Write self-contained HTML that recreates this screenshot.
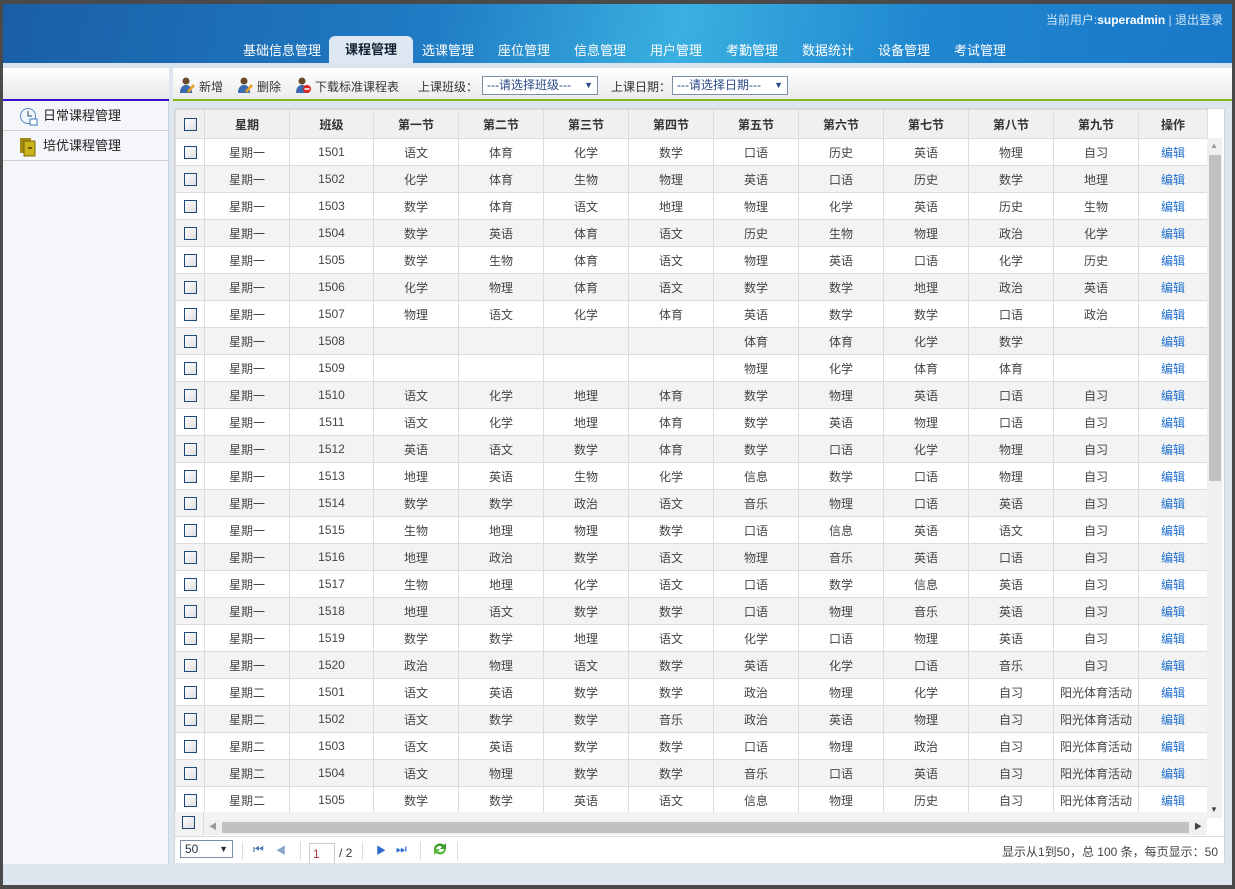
<!DOCTYPE html>
<html><head><meta charset="utf-8"><style>
*{margin:0;padding:0;box-sizing:border-box}
body{width:1235px;height:889px;overflow:hidden;background:#4a4a4a;font-family:"Liberation Sans","Noto Sans CJK SC",sans-serif;font-size:12px;color:#333;position:relative}
.abs{position:absolute}
#frame{left:3px;top:4px;width:1229px;height:881px;background:#dde6ef}
#hdr{left:3px;top:4px;width:1229px;height:59px;background:linear-gradient(100deg,#1a5fa6 0%,#1f7cc4 35%,#3ab0e0 55%,#1f86cf 75%,#1a78c8 100%)}
#user{right:12px;top:11px;color:#cfe6f7;font-size:12px}
#user b{color:#fff}
.nav{top:40px;color:#fff;font-size:13px}
#tab{left:329px;top:36px;width:84px;height:27px;background:#dde8f2;border-radius:6px 6px 0 0;color:#123;font-weight:bold;font-size:13px;text-align:center;line-height:28px}
#side{left:3px;top:68px;width:166px;height:796px;background:#f4f6f9;border-right:1px solid #cbd3dc}
#sidetop{left:3px;top:68px;width:166px;height:32px;background:linear-gradient(#fff,#e6e6e6)}
#sideline{left:3px;top:99px;width:166px;height:2px;background:#3a10d0}
.si{left:3px;width:166px;height:30px;border-bottom:1px solid #cfcfcf;font-size:13px;line-height:30px;padding-left:40px;color:#222}
#tool{left:173px;top:68px;width:1059px;height:32px;background:linear-gradient(#fff,#ebebeb)}
#green{left:173px;top:99px;width:1059px;height:2px;background:#8ab51a}
.sel{height:19px;border:1px solid #7a8ea8;background:#fff;color:#2b4a8a;line-height:17px;padding-left:4px;top:76px;font-size:12px}
#grid{left:174px;top:108px;width:1051px;height:755px;background:#fff;border:1px solid #d5d5d5}
table{border-collapse:collapse;table-layout:fixed;position:absolute;left:175px;top:109px}
td{height:27px;border:1px solid #dcdcdc;text-align:center;font-size:12px;color:#444;white-space:nowrap;overflow:hidden}
tr.h td{height:29px;background:#f0f0f0;font-weight:bold;color:#333}
tr:nth-child(odd):not(.h) td{background:#f3f3f3}
td a{color:#1f6fd0}
.cb{display:inline-block;width:13px;height:13px;border:1px solid #1e4a7a;background:linear-gradient(135deg,#fff,#ddd);vertical-align:middle}
#vs{left:1207px;top:138px;width:15px;height:680px;background:#f0f0f0}
#hs{left:204px;top:820px;width:1003px;height:15px;background:#f0f0f0}
#pager{left:175px;top:836px;width:1049px;height:27px;background:#fff;border-top:1px solid #ddd}
</style></head><body>
<div class="abs" id="frame"></div>
<div class="abs" id="hdr"></div>
<div class="abs" id="user">当前用户:<b>superadmin</b> | 退出登录</div>
<div class="abs nav" style="left:243px">基础信息管理</div>
<div class="abs" id="tab">课程管理</div>
<div class="abs nav" style="left:422px">选课管理</div>
<div class="abs nav" style="left:498px">座位管理</div>
<div class="abs nav" style="left:574px">信息管理</div>
<div class="abs nav" style="left:650px">用户管理</div>
<div class="abs nav" style="left:726px">考勤管理</div>
<div class="abs nav" style="left:802px">数据统计</div>
<div class="abs nav" style="left:878px">设备管理</div>
<div class="abs nav" style="left:954px">考试管理</div>
<div class="abs" style="left:3px;top:63px;width:1229px;height:5px;background:#d8e3ee"></div>
<div class="abs" id="side"></div>
<div class="abs" id="sidetop"></div>
<div class="abs" id="sideline"></div>
<div class="abs si" style="top:101px">日常课程管理</div>
<div class="abs si" style="top:131px">培优课程管理</div>
<svg class="abs" style="left:19px;top:107px" width="20" height="20"><circle cx="9" cy="9" r="7.5" fill="#eef5fb" stroke="#5a8ab8"/><path d="M9 4v5h4" stroke="#345" fill="none"/><rect x="11" y="12" width="7" height="6" fill="#fff" stroke="#3a7ac0"/></svg>
<svg class="abs" style="left:19px;top:137px" width="20" height="20"><rect x="1" y="1" width="11" height="15" fill="#a08a10"/><rect x="5" y="4" width="11" height="15" fill="#c8b418" stroke="#7a6a08"/><rect x="9" y="10" width="4" height="2" fill="#6a5a00"/></svg>
<div class="abs" id="tool"></div>
<div class="abs" id="green"></div>
<svg class="abs" style="left:179px;top:77px" width="16" height="16"><circle cx="7" cy="4" r="3.5" fill="#6a4a2a"/><path d="M1 16c0-6 3-8 6-8s6 2 6 8z" fill="#3a6ab0"/><path d="M9 15l6-7" stroke="#e8a020" stroke-width="2.5"/></svg>
<div class="abs" style="left:199px;top:78px">新增</div>
<svg class="abs" style="left:237px;top:77px" width="16" height="16"><circle cx="7" cy="4" r="3.5" fill="#6a4a2a"/><path d="M1 16c0-6 3-8 6-8s6 2 6 8z" fill="#3a6ab0"/><path d="M9 15l6-7" stroke="#e8a020" stroke-width="2.5"/></svg>
<div class="abs" style="left:257px;top:78px">删除</div>
<svg class="abs" style="left:295px;top:77px" width="16" height="16"><circle cx="7" cy="4" r="3.5" fill="#6a4a2a"/><path d="M1 16c0-6 3-8 6-8s6 2 6 8z" fill="#3a6ab0"/><circle cx="12" cy="12" r="4" fill="#e02020"/><rect x="9.5" y="11.2" width="5" height="1.6" fill="#fff"/></svg>
<div class="abs" style="left:315px;top:78px">下载标准课程表</div>
<div class="abs" style="left:418px;top:78px">上课班级：</div>
<div class="abs sel" style="left:482px;width:116px">---请选择班级--- <span style="float:right;margin-right:4px;font-size:9px">▼</span></div>
<div class="abs" style="left:611px;top:78px">上课日期：</div>
<div class="abs sel" style="left:672px;width:116px">---请选择日期--- <span style="float:right;margin-right:4px;font-size:9px">▼</span></div>
<div class="abs" id="grid"></div>
<table>
<colgroup><col width="29"><col width="85"><col width="84"><col width="85"><col width="85"><col width="85"><col width="85"><col width="85"><col width="85"><col width="85"><col width="85"><col width="85"><col width="69"></colgroup>
<tr class="h"><td><span class="cb"></span></td><td>星期</td><td>班级</td><td>第一节</td><td>第二节</td><td>第三节</td><td>第四节</td><td>第五节</td><td>第六节</td><td>第七节</td><td>第八节</td><td>第九节</td><td>操作</td></tr>
<tr><td><span class="cb"></span></td><td>星期一</td><td>1501</td><td>语文</td><td>体育</td><td>化学</td><td>数学</td><td>口语</td><td>历史</td><td>英语</td><td>物理</td><td>自习</td><td><a>编辑</a></td></tr>
<tr><td><span class="cb"></span></td><td>星期一</td><td>1502</td><td>化学</td><td>体育</td><td>生物</td><td>物理</td><td>英语</td><td>口语</td><td>历史</td><td>数学</td><td>地理</td><td><a>编辑</a></td></tr>
<tr><td><span class="cb"></span></td><td>星期一</td><td>1503</td><td>数学</td><td>体育</td><td>语文</td><td>地理</td><td>物理</td><td>化学</td><td>英语</td><td>历史</td><td>生物</td><td><a>编辑</a></td></tr>
<tr><td><span class="cb"></span></td><td>星期一</td><td>1504</td><td>数学</td><td>英语</td><td>体育</td><td>语文</td><td>历史</td><td>生物</td><td>物理</td><td>政治</td><td>化学</td><td><a>编辑</a></td></tr>
<tr><td><span class="cb"></span></td><td>星期一</td><td>1505</td><td>数学</td><td>生物</td><td>体育</td><td>语文</td><td>物理</td><td>英语</td><td>口语</td><td>化学</td><td>历史</td><td><a>编辑</a></td></tr>
<tr><td><span class="cb"></span></td><td>星期一</td><td>1506</td><td>化学</td><td>物理</td><td>体育</td><td>语文</td><td>数学</td><td>数学</td><td>地理</td><td>政治</td><td>英语</td><td><a>编辑</a></td></tr>
<tr><td><span class="cb"></span></td><td>星期一</td><td>1507</td><td>物理</td><td>语文</td><td>化学</td><td>体育</td><td>英语</td><td>数学</td><td>数学</td><td>口语</td><td>政治</td><td><a>编辑</a></td></tr>
<tr><td><span class="cb"></span></td><td>星期一</td><td>1508</td><td></td><td></td><td></td><td></td><td>体育</td><td>体育</td><td>化学</td><td>数学</td><td></td><td><a>编辑</a></td></tr>
<tr><td><span class="cb"></span></td><td>星期一</td><td>1509</td><td></td><td></td><td></td><td></td><td>物理</td><td>化学</td><td>体育</td><td>体育</td><td></td><td><a>编辑</a></td></tr>
<tr><td><span class="cb"></span></td><td>星期一</td><td>1510</td><td>语文</td><td>化学</td><td>地理</td><td>体育</td><td>数学</td><td>物理</td><td>英语</td><td>口语</td><td>自习</td><td><a>编辑</a></td></tr>
<tr><td><span class="cb"></span></td><td>星期一</td><td>1511</td><td>语文</td><td>化学</td><td>地理</td><td>体育</td><td>数学</td><td>英语</td><td>物理</td><td>口语</td><td>自习</td><td><a>编辑</a></td></tr>
<tr><td><span class="cb"></span></td><td>星期一</td><td>1512</td><td>英语</td><td>语文</td><td>数学</td><td>体育</td><td>数学</td><td>口语</td><td>化学</td><td>物理</td><td>自习</td><td><a>编辑</a></td></tr>
<tr><td><span class="cb"></span></td><td>星期一</td><td>1513</td><td>地理</td><td>英语</td><td>生物</td><td>化学</td><td>信息</td><td>数学</td><td>口语</td><td>物理</td><td>自习</td><td><a>编辑</a></td></tr>
<tr><td><span class="cb"></span></td><td>星期一</td><td>1514</td><td>数学</td><td>数学</td><td>政治</td><td>语文</td><td>音乐</td><td>物理</td><td>口语</td><td>英语</td><td>自习</td><td><a>编辑</a></td></tr>
<tr><td><span class="cb"></span></td><td>星期一</td><td>1515</td><td>生物</td><td>地理</td><td>物理</td><td>数学</td><td>口语</td><td>信息</td><td>英语</td><td>语文</td><td>自习</td><td><a>编辑</a></td></tr>
<tr><td><span class="cb"></span></td><td>星期一</td><td>1516</td><td>地理</td><td>政治</td><td>数学</td><td>语文</td><td>物理</td><td>音乐</td><td>英语</td><td>口语</td><td>自习</td><td><a>编辑</a></td></tr>
<tr><td><span class="cb"></span></td><td>星期一</td><td>1517</td><td>生物</td><td>地理</td><td>化学</td><td>语文</td><td>口语</td><td>数学</td><td>信息</td><td>英语</td><td>自习</td><td><a>编辑</a></td></tr>
<tr><td><span class="cb"></span></td><td>星期一</td><td>1518</td><td>地理</td><td>语文</td><td>数学</td><td>数学</td><td>口语</td><td>物理</td><td>音乐</td><td>英语</td><td>自习</td><td><a>编辑</a></td></tr>
<tr><td><span class="cb"></span></td><td>星期一</td><td>1519</td><td>数学</td><td>数学</td><td>地理</td><td>语文</td><td>化学</td><td>口语</td><td>物理</td><td>英语</td><td>自习</td><td><a>编辑</a></td></tr>
<tr><td><span class="cb"></span></td><td>星期一</td><td>1520</td><td>政治</td><td>物理</td><td>语文</td><td>数学</td><td>英语</td><td>化学</td><td>口语</td><td>音乐</td><td>自习</td><td><a>编辑</a></td></tr>
<tr><td><span class="cb"></span></td><td>星期二</td><td>1501</td><td>语文</td><td>英语</td><td>数学</td><td>数学</td><td>政治</td><td>物理</td><td>化学</td><td>自习</td><td>阳光体育活动</td><td><a>编辑</a></td></tr>
<tr><td><span class="cb"></span></td><td>星期二</td><td>1502</td><td>语文</td><td>数学</td><td>数学</td><td>音乐</td><td>政治</td><td>英语</td><td>物理</td><td>自习</td><td>阳光体育活动</td><td><a>编辑</a></td></tr>
<tr><td><span class="cb"></span></td><td>星期二</td><td>1503</td><td>语文</td><td>英语</td><td>数学</td><td>数学</td><td>口语</td><td>物理</td><td>政治</td><td>自习</td><td>阳光体育活动</td><td><a>编辑</a></td></tr>
<tr><td><span class="cb"></span></td><td>星期二</td><td>1504</td><td>语文</td><td>物理</td><td>数学</td><td>数学</td><td>音乐</td><td>口语</td><td>英语</td><td>自习</td><td>阳光体育活动</td><td><a>编辑</a></td></tr>
<tr><td><span class="cb"></span></td><td>星期二</td><td>1505</td><td>数学</td><td>数学</td><td>英语</td><td>语文</td><td>信息</td><td>物理</td><td>历史</td><td>自习</td><td>阳光体育活动</td><td><a>编辑</a></td></tr>
</table>
<div class="abs" style="left:204px;top:812px;width:1003px;height:8px;background:#f3f3f3"></div>
<div class="abs" style="left:175px;top:812px;width:29px;height:24px;background:#f3f3f3;border-right:1px solid #dcdcdc"><span class="cb" style="position:absolute;left:7px;top:4px"></span></div>
<div class="abs" id="hs"><div class="abs" style="left:18px;top:2px;width:967px;height:11px;background:#c1c1c1"></div><span class="abs" style="left:5px;top:1px;font-size:8px;color:#999">◀</span><span class="abs" style="right:5px;top:1px;font-size:8px;color:#444">▶</span></div>
<div class="abs" id="vs"><div class="abs" style="left:2px;top:17px;width:12px;height:326px;background:#c1c1c1"></div><span class="abs" style="left:3px;top:3px;font-size:8px;color:#999">▲</span><span class="abs" style="left:3px;top:667px;font-size:8px;color:#444">▼</span></div>
<div class="abs" id="pager"></div>
<div class="abs" style="left:180px;top:840px;width:53px;height:18px;border:1px solid #7a8ea8;background:#fff;padding-left:4px;line-height:16px;color:#234">50<span style="float:right;margin-right:4px;font-size:9px">▼</span></div>
<div class="abs" style="left:253px;top:842px;color:#4a78b8;font-size:12px">⏮</div>
<div class="abs" style="left:276px;top:842px;color:#8aa4c8;font-size:10px">◀</div>
<div class="abs" style="left:309px;top:843px;width:26px;height:20px;border:1px solid #ccc;border-bottom:none;background:#fff;padding-left:3px;line-height:20px;color:#a33">1</div>
<div class="abs" style="left:339px;top:846px">/ 2</div>
<div class="abs" style="left:376px;top:842px;color:#2a6ad0;font-size:10px">▶</div>
<div class="abs" style="left:396px;top:842px;color:#2a6ad0;font-size:12px">⏭</div>
<svg class="abs" style="left:431px;top:841px" width="18" height="16"><path d="M3 8a6 6 0 0 1 10-4l2-2v6h-6l2-2a3.5 3.5 0 0 0-6 2z" fill="#3a9a2a"/><path d="M15 8a6 6 0 0 1-10 4l-2 2v-6h6l-2 2a3.5 3.5 0 0 0 6-2z" fill="#5ab83a"/></svg>
<div class="abs" style="left:242px;top:842px;width:1px;height:18px;background:#ddd"></div>
<div class="abs" style="left:300px;top:842px;width:1px;height:18px;background:#ddd"></div>
<div class="abs" style="left:362px;top:842px;width:1px;height:18px;background:#ddd"></div>
<div class="abs" style="left:420px;top:842px;width:1px;height:18px;background:#ddd"></div>
<div class="abs" style="left:457px;top:842px;width:1px;height:18px;background:#ddd"></div>
<div class="abs" style="right:17px;top:843px;color:#444">显示从1到50，总 100 条，每页显示：50</div>
</body></html>
